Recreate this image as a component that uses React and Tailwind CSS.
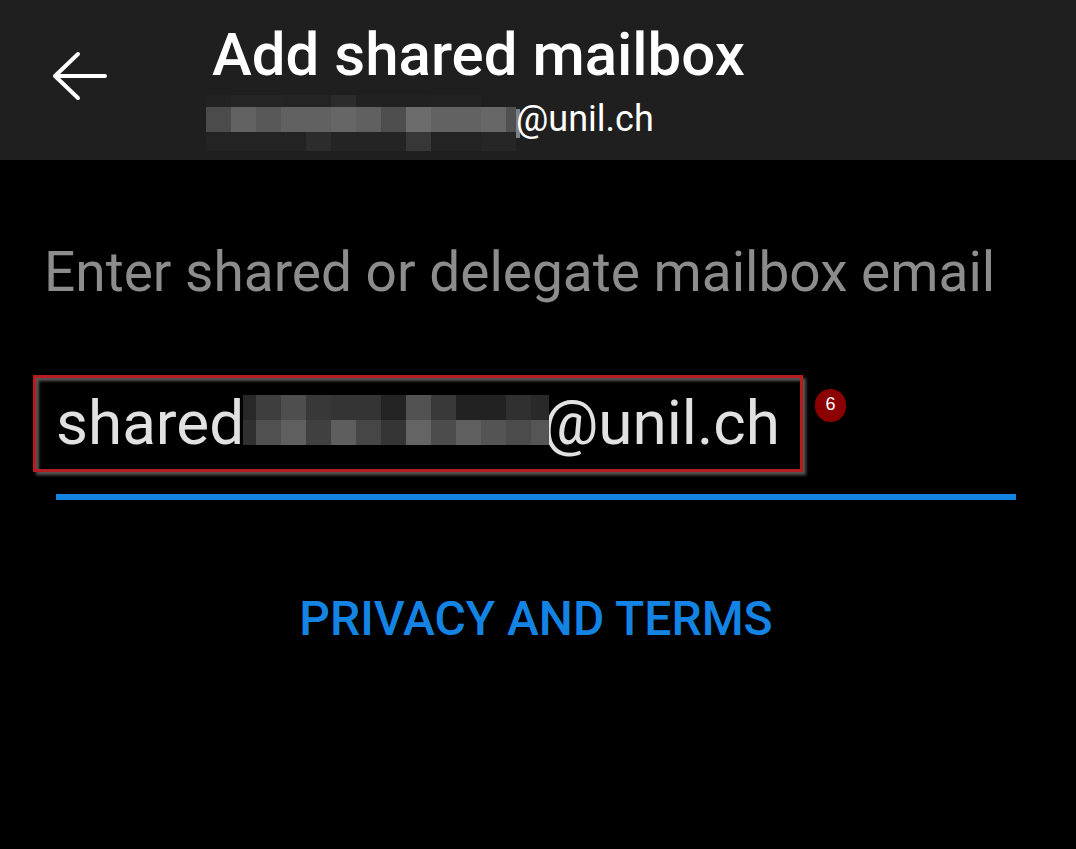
import React, { useState } from 'react';

const HEADER_BLOCKS = [
  [0, 0, 25, 12, '#222222'], [25, 0, 50, 12, '#252525'], [75, 0, 50, 12, '#232323'], [125, 0, 25, 12, '#2b2b2b'],
  [150, 0, 75, 12, '#212121'], [225, 0, 50, 12, '#222222'],
  [0, 12, 25, 25, '#4b4b4b'], [25, 12, 25, 25, '#626262'], [50, 12, 25, 25, '#585858'], [75, 12, 50, 25, '#616161'],
  [125, 12, 25, 25, '#666666'], [150, 12, 25, 25, '#606060'], [175, 12, 25, 25, '#4e4e4e'], [200, 12, 25, 25, '#6c6c6c'],
  [225, 12, 50, 25, '#626262'], [275, 12, 25, 25, '#676767'], [300, 12, 10, 25, '#505050'],
  [0, 37, 100, 19, '#232323'], [100, 37, 25, 19, '#2c2c2c'], [125, 37, 75, 19, '#242424'],
  [200, 37, 25, 19, '#373737'], [225, 37, 50, 19, '#232323'], [275, 37, 35, 19, '#262626'],
  [310, 14, 4, 29, '#808080'],
];

const FIELD_BLOCKS = [
  [0, 0, 13, 25, '#282828'], [13, 0, 25, 25, '#3e3e3e'], [38, 0, 25, 25, '#4e4e4e'], [63, 0, 25, 25, '#383838'],
  [88, 0, 50, 25, '#343434'], [138, 0, 25, 25, '#232323'], [163, 0, 25, 25, '#525252'], [188, 0, 25, 25, '#393939'],
  [213, 0, 50, 25, '#222222'], [263, 0, 25, 25, '#303030'], [288, 0, 18, 25, '#292929'],
  [0, 25, 13, 25, '#303030'], [13, 25, 25, 25, '#505050'], [38, 25, 25, 25, '#5f5f5f'], [63, 25, 25, 25, '#404040'],
  [88, 25, 25, 25, '#5e5e5e'], [113, 25, 25, 25, '#464646'], [138, 25, 25, 25, '#353535'], [163, 25, 25, 25, '#646464'],
  [188, 25, 25, 25, '#4c4c4c'], [213, 25, 25, 25, '#5f5f5f'], [238, 25, 25, 25, '#545454'], [263, 25, 25, 25, '#4b4b4b'],
  [288, 25, 18, 25, '#555555'],
];

const Mosaic = ({ blocks, width, height, className }) => (
  <svg width={width} height={height} shapeRendering="crispEdges" aria-hidden="true" className={className}>
    {blocks.map(([x, y, w, h, fill]) => (
      <rect key={`${x}-${y}`} x={x} y={y} width={w} height={h} fill={fill} />
    ))}
  </svg>
);

const BackArrow = () => (
  <svg width="56" height="52" viewBox="0 0 56 52" fill="none" stroke="#ffffff" strokeWidth="4" strokeLinecap="round" strokeLinejoin="round" aria-hidden="true">
    <path d="M53 26H3M26 4L3 26L26 48" />
  </svg>
);

const Header = () => (
  <header className="flex bg-[#1f1f1f] pl-[52px]">
    <button type="button" aria-label="Back" className="mt-[50px] shrink-0 self-start">
      <BackArrow />
    </button>
    <div className="ml-[98px] min-w-0 pb-2">
      <h1 className="mt-[21px] pl-[6px] text-[60px] leading-[68px] font-medium text-white">Add shared mailbox</h1>
      <div className="mt-[6px] flex items-start">
        <Mosaic blocks={HEADER_BLOCKS} width={314} height={57} className="shrink-0" />
        <span className="-ml-1 text-[36px] leading-[48px] text-white">@unil.ch</span>
      </div>
    </div>
  </header>
);

const MailboxField = () => {
  const [email, setEmail] = useState(`shared${' '.repeat(19)}\u200a@unil.ch`);

  return (
    <div className="relative mt-[68px] mr-[60px] ml-[56px]">
      <input
        id="mailbox"
        type="text"
        value={email}
        onChange={(e) => setEmail(e.target.value)}
        className="block h-[128px] w-full border-b-6 border-[#1484e4] bg-transparent pb-[22px] text-[62px] text-[#e1e1e1] outline-none"
      />
      <Mosaic blocks={FIELD_BLOCKS} width={306} height={50} className="absolute top-[23px] left-[187px]" />
      {/* step marker around the address */}
      <div className="pointer-events-none absolute top-[3px] -left-[23px] h-[97px] w-[770px] border-3 border-[#b51d20] shadow-[3px_3px_3px_#5c5454,inset_3px_3px_3px_#5c5454]" />
      <span className="absolute top-[17px] left-[759px] flex h-[33px] w-[31px] items-center justify-center rounded-full bg-[#8b0000] pb-[3px] font-['Liberation_Sans',sans-serif] text-[18px] text-white">
        6
      </span>
    </div>
  );
};

export default function App() {
  return (
    <div className="min-h-screen bg-black font-[Roboto,sans-serif]">
      <Header />
      <main className="pt-20">
        <label htmlFor="mailbox" className="block pl-[44px] text-[55px] leading-[64px] text-[#8c8c8c]">
          Enter shared or delegate mailbox email
        </label>
        <MailboxField />
        <div className="mt-[91px] flex justify-center pr-1">
          <a href="#privacy" className="text-[48px] leading-[56px] font-medium text-[#1484e4]">
            PRIVACY AND TERMS
          </a>
        </div>
      </main>
    </div>
  );
}
